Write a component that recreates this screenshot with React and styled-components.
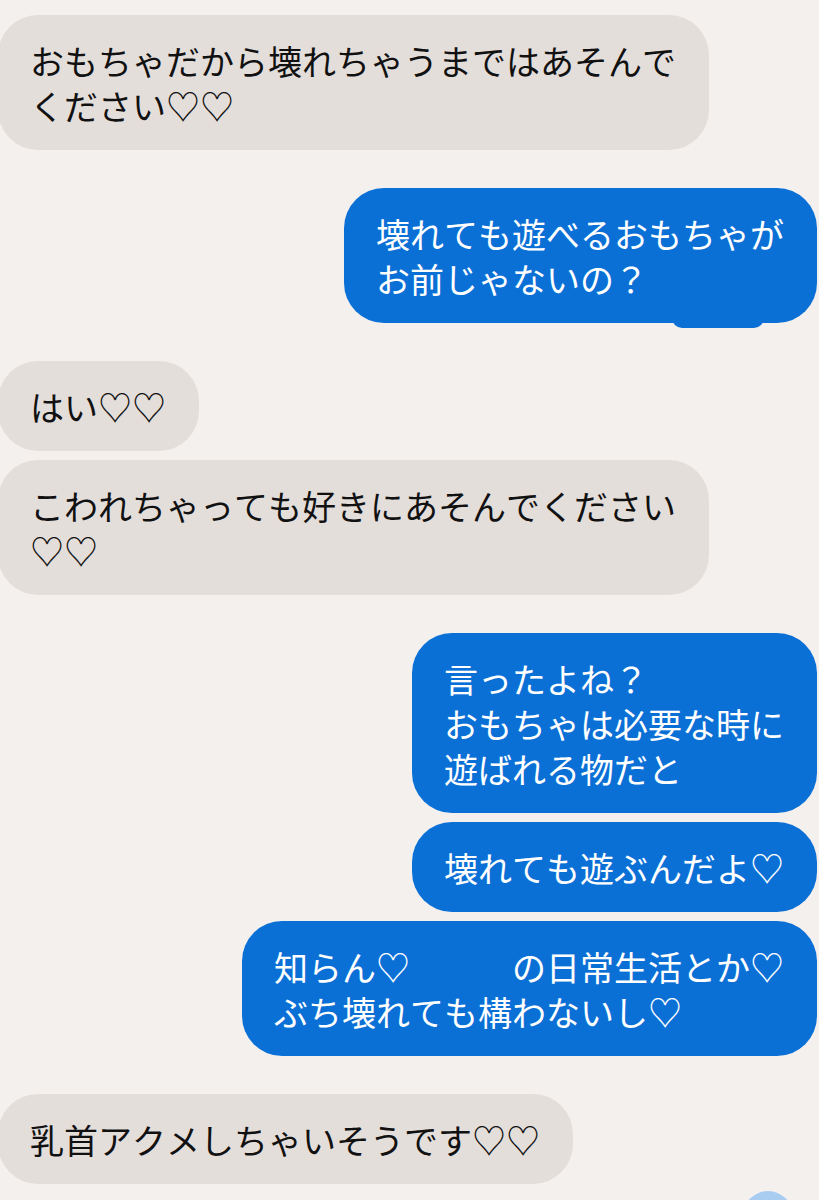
import React from "react"
import styled, { createGlobalStyle } from "styled-components"

const GlobalStyle = createGlobalStyle`
  html, body {
    margin: 0;
    padding: 0;
    background: #f4f0ee;
  }
`

const Screen = styled.div`
  position: relative;
  width: 819px;
  height: 1200px;
  overflow: hidden;
  background: #f4f0ee;
  display: flex;
  flex-direction: column;
  padding-top: 15px;
  box-sizing: border-box;
  font-family: "Noto Sans CJK JP", "Noto Sans", sans-serif;
`

const Row = styled.div`
  display: flex;
  justify-content: ${({ $mine }) => ($mine ? "flex-end" : "flex-start")};
  margin-top: ${({ $gap }) => $gap}px;
  padding-right: ${({ $mine }) => ($mine ? "2px" : "0")};
  margin-left: ${({ $mine }) => ($mine ? "0" : "-2px")};
`

const Bubble = styled.div`
  position: relative;
  box-sizing: border-box;
  padding: 22.5px 33px 22.5px 32px;
  border-radius: 40px;
  font-size: 34px;
  line-height: 45px;
  font-kerning: none;
  white-space: pre-line;
  background: ${({ $mine }) => ($mine ? "#0b70d6" : "#e4dedb")};
  color: ${({ $mine }) => ($mine ? "#ffffff" : "#111111")};

  ${({ $tail }) =>
    $tail &&
    `
    &::after {
      content: "";
      position: absolute;
      right: 53px;
      bottom: -5px;
      width: 92px;
      height: 20px;
      border-radius: 10px;
      background: #0b70d6;
    }
  `}
`

const ScrollButton = styled.div`
  position: absolute;
  left: 743px;
  top: 1191px;
  width: 50px;
  height: 50px;
  border-radius: 50%;
  background: #a8cdf1;
`

const messages = [
  { mine: false, text: "おもちゃだから壊れちゃうまではあそんで\nください♡♡" },
  { mine: true, text: "壊れても遊べるおもちゃが\nお前じゃないの？", tail: true },
  { mine: false, text: "はい♡♡" },
  { mine: false, text: "こわれちゃっても好きにあそんでください\n♡♡" },
  { mine: true, text: "言ったよね？\nおもちゃは必要な時に\n遊ばれる物だと" },
  { mine: true, text: "壊れても遊ぶんだよ♡" },
  { mine: true, text: "知らん♡　　　の日常生活とか♡\nぶち壊れても構わないし♡" },
  { mine: false, text: "乳首アクメしちゃいそうです♡♡" },
]

const App = () => {
  return (
    <>
      <GlobalStyle />
      <Screen>
        {messages.map((m, i) => {
          const prev = messages[i - 1]
          const gap = !prev ? 0 : prev.mine === m.mine ? 9 : 38
          return (
            <Row key={i} $mine={m.mine} $gap={gap}>
              <Bubble $mine={m.mine} $tail={m.tail}>
                {m.text}
              </Bubble>
            </Row>
          )
        })}
        <ScrollButton />
      </Screen>
    </>
  )
}

export default App
